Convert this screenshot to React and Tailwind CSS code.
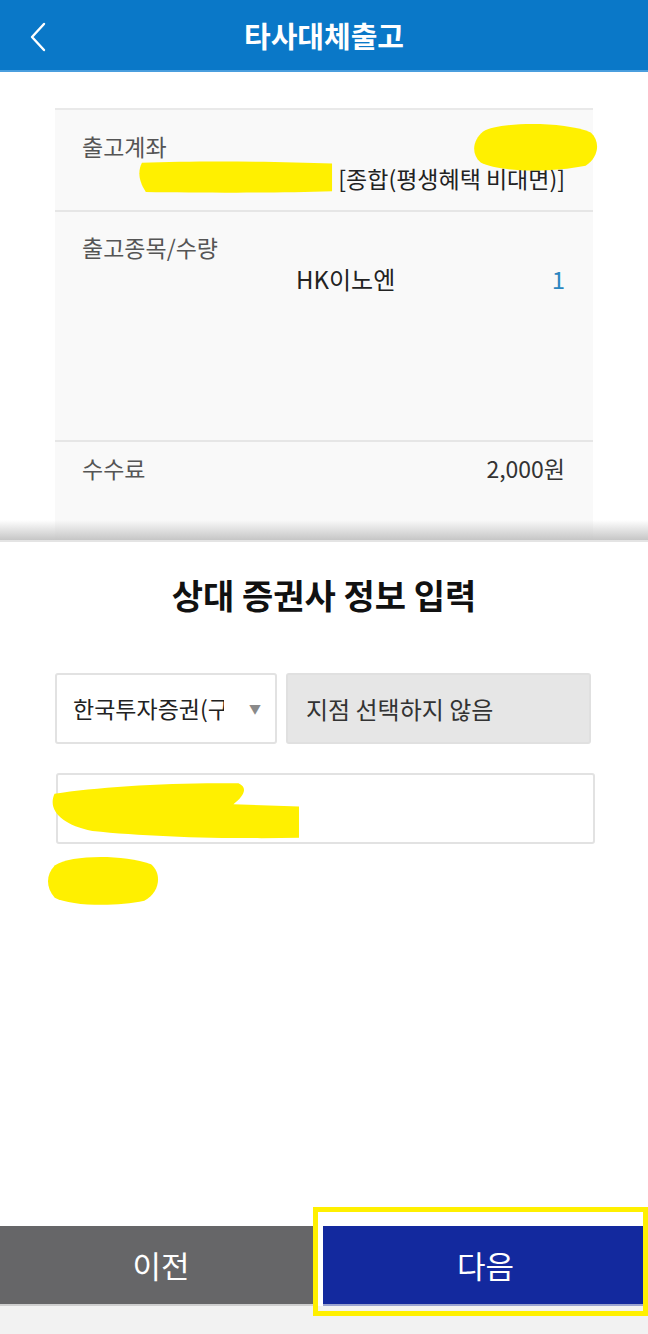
import React from "react";

const font = { fontFamily: '"Noto Sans CJK KR", Roboto, sans-serif' };

const Scribble = ({ className, d }) => (
  <svg className={`absolute pointer-events-none ${className}`} viewBox="0 0 100 100" preserveAspectRatio="none">
    <path d={d} fill="#fff000" />
  </svg>
);

const App = () => {
  return (
    <div
      className="relative w-[648px] h-[1334px] overflow-hidden bg-white flex flex-col font-['Noto_Sans_CJK_KR',Roboto,sans-serif]"
      style={font}
    >
      {/* header */}
      <header className="h-[72px] shrink-0 bg-[#0a78c8] border-b-2 border-[#4a9ede] flex items-center relative">
        <button className="absolute left-[24px] top-[20px] w-[28px] h-[34px] flex items-center justify-center">
          <svg width="18" height="30" viewBox="0 0 18 30" fill="none">
            <path d="M15 2 L3 15 L15 28" stroke="white" strokeWidth="2.4" strokeLinecap="round" strokeLinejoin="round" />
          </svg>
        </button>
        <h1 className="flex-1 text-center text-white text-[29px] font-bold leading-[40px]">타사대체출고</h1>
      </header>

      {/* summary card */}
      <div className="h-[468px] shrink-0 pt-[36px] px-[55px] bg-white">
        <div className="h-full bg-[#f9f9f9] border-t-2 border-[#e9e9e9] text-[23px]">
          <div className="h-[102px] pt-[20px] pl-[27px] pr-[28px] border-b-2 border-[#e6e6e6] flex flex-col">
            <span className="text-[#555] leading-[32px]">출고계좌</span>
            <span className="text-[#222] text-[23px] leading-[32px] self-end">[종합(평생혜택 비대면)]</span>
          </div>
          <div className="h-[230px] pt-[19px] pl-[27px] pr-[28px] border-b-2 border-[#e6e6e6] flex flex-col">
            <span className="text-[#555] leading-[32px]">출고종목/수량</span>
            <div className="flex items-center leading-[32px]">
              <span className="ml-[214px] flex-1 text-[#222] text-[24px]">HK이노엔</span>
              <span className="text-[#2c86c0] text-[24px]">1</span>
            </div>
          </div>
          <div className="pt-[10px] pl-[27px] pr-[28px] flex justify-between leading-[32px]">
            <span className="text-[#555]">수수료</span>
            <span className="text-[#333] text-[23px]">2,000원</span>
          </div>
        </div>
      </div>

      {/* bottom sheet */}
      <section className="relative flex-1 flex flex-col bg-white border-t-2 border-[#e4e4e4]">
        <div className="absolute -top-[22px] left-0 right-0 h-[20px] bg-gradient-to-b from-transparent to-[#c6c6c6]"></div>
        <h2 className="pt-[31px] text-center text-[34px] font-bold leading-[44px] text-[#111]">상대 증권사 정보 입력</h2>

        <div className="mt-[56px] px-[55px] flex gap-[9px] h-[71px]">
          <div className="w-[222px] border-2 border-[#e2e2e2] rounded-[3px] bg-white flex items-center pl-[16px] pr-[14px]">
            <span className="w-[151px] overflow-hidden whitespace-nowrap text-[23px] text-[#222]">한국투자증권(구</span>
            <span className="text-[#8a8a8a] text-[12px] ml-auto">▼</span>
          </div>
          <div className="flex-1 mr-[2px] bg-[#e6e6e6] border-2 border-[#e0e0e0] rounded-[3px] flex items-center pl-[18px] text-[24px] text-[#333]">
            지점 선택하지 않음
          </div>
        </div>

        <div className="mt-[29px] mr-[53px] ml-[56px] h-[71px] border-2 border-[#e2e2e2] rounded-[3px] bg-white"></div>

        <div className="flex-1"></div>

        <div className="h-[80px] flex shrink-0">
          <button className="w-[316px] bg-[#666668] text-white text-[31px] pl-[6px] border-b-2 border-[#cfcfcf]">이전</button>
          <div className="w-[7px] bg-white"></div>
          <button className="flex-1 bg-[#13299e] text-white text-[31px] border-b-2 border-[#9aa3d0]">다음</button>
        </div>
        <div className="h-[28px] bg-[#f2f2f2] shrink-0"></div>
      </section>

      {/* redaction marks */}
      <Scribble className="left-[473px] top-[121px] w-[128px] h-[52px]" d="M8 20 C20 2 70 0 92 22 C100 40 98 70 88 86 C60 100 20 98 6 80 C-2 62 0 36 8 20 Z" />
      <Scribble className="left-[138px] top-[160px] w-[196px] h-[34px]" d="M2 8 C30 2 70 4 99 10 L99 92 C70 98 30 96 4 94 C0 60 0 30 2 8 Z" />
      <Scribble className="left-[47px] top-[781px] w-[252px] h-[58px]" d="M3 22 C20 10 50 2 76 4 C80 12 78 26 74 40 L100 44 L100 98 C70 100 40 96 18 86 C6 76 0 50 3 22 Z" />
      <Scribble className="left-[48px] top-[855px] w-[112px] h-[52px]" d="M6 20 C20 0 66 -2 92 18 C102 36 100 72 86 88 C60 100 20 98 6 82 C-2 62 -2 38 6 20 Z" />

      {/* highlight frame */}
      <div className="absolute left-[313px] top-[1207px] w-[335px] h-[109px] border-[5px] border-[#fff000] pointer-events-none"></div>
    </div>
  );
};

export default App;
